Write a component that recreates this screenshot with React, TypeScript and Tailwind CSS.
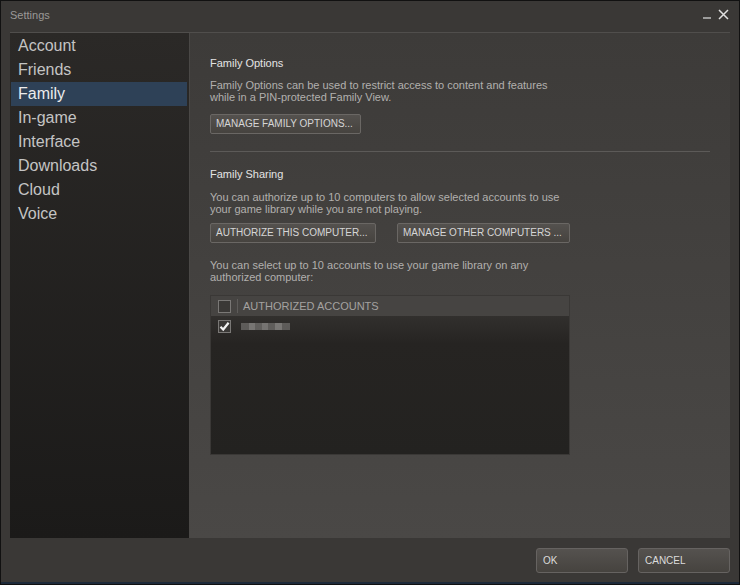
import React from "react";

const navItems = ["Account", "Friends", "Family", "In-game", "Interface", "Downloads", "Cloud", "Voice"];

const SteamButton: React.FC<{ label: string; className?: string }> = ({ label, className }) => (
  <button
    className={
      "h-[20px] whitespace-nowrap rounded-[2px] border border-[#6a6764] bg-[linear-gradient(#54514e,#46433f)] px-[5px] text-left text-[10px] leading-none text-[#d6d6d6] " +
      (className ?? "")
    }
  >
    {label}
  </button>
);

const Checkbox: React.FC<{ checked?: boolean }> = ({ checked }) => (
  <div className="flex h-[13px] w-[13px] items-center justify-center border border-[#7a7876] bg-[#3a3836]">
    {checked && (
      <svg width="11" height="11" viewBox="0 0 11 11">
        <path d="M1.5 5.8 L4.2 8.5 L9.6 1.8" stroke="#f2f2f2" strokeWidth="2.2" fill="none" />
      </svg>
    )}
  </div>
);

export default function App() {
  return (
    <div
      className="flex h-[585px] w-[740px] flex-col border border-[#111] bg-[#3a3836] text-[#c8c8c8]"
      style={{ fontFamily: "'Liberation Sans', Arial, sans-serif" }}
    >
      {/* title bar */}
      <div className="flex h-[31px] items-start justify-between pl-[9px] pr-[10px] pt-[6px]">
        <span className="text-[11px] text-[#9a9896]">Settings</span>
        <div className="flex items-center gap-[6px] text-[#d0d0d0]">
          <svg width="10" height="14" viewBox="0 0 10 14">
            <path d="M1 11 H9" stroke="#c8c8c8" strokeWidth="1.4" />
          </svg>
          <svg width="11" height="11" viewBox="0 0 11 11">
            <path d="M1 1 L10 10 M10 1 L1 10" stroke="#e0e0e0" strokeWidth="1.5" />
          </svg>
        </div>
      </div>

      {/* body */}
      <div className="mx-[9px] flex h-[506px] border-t border-[#504e4c]">
        <div className="flex w-[180px] flex-col border-r border-[#4a4846] bg-[linear-gradient(#2b2927,#1b1a19)] pl-[1px] pr-[2px] pt-px">
          {navItems.map((item) => (
            <div
              key={item}
              className={
                "h-[24px] pl-[7px] text-[16px] leading-[24px] " +
                (item === "Family" ? "bg-[#2e4157] text-[#ececec]" : "text-[#c4c4c4]")
              }
            >
              {item}
            </div>
          ))}
        </div>

        <div className="flex-1 bg-[linear-gradient(#3d3b39,#4a4846)] pl-[20px] pr-[20px] pt-[23px]">
          <div className="text-[11px] leading-[14px] text-[#e4e4e4]">Family Options</div>
          <p className="mt-[9px] text-[11px] leading-[12px] text-[#b2b0ae]">
            Family Options can be used to restrict access to content and features
            <br />
            while in a PIN-protected Family View.
          </p>
          <SteamButton label="MANAGE FAMILY OPTIONS..." className="mt-[11px] w-[151px]" />

          <div className="mt-[17px] h-px bg-[#5c5a58]" />

          <div className="mt-[15px] text-[11px] leading-[14px] text-[#e4e4e4]">Family Sharing</div>
          <p className="mt-[10px] text-[11px] leading-[12px] text-[#b2b0ae]">
            You can authorize up to 10 computers to allow selected accounts to use
            <br />
            your game library while you are not playing.
          </p>
          <div className="mt-[8px] flex gap-[21px]">
            <SteamButton label="AUTHORIZE THIS COMPUTER..." className="w-[166px]" />
            <SteamButton label="MANAGE OTHER COMPUTERS ..." className="w-[173px]" />
          </div>

          <p className="mt-[16px] text-[11px] leading-[12px] text-[#b2b0ae]">
            You can select up to 10 accounts to use your game library on any
            <br />
            authorized computer:
          </p>

          <div className="mt-[12px] flex h-[160px] w-[360px] flex-col border border-[#3a3836] bg-[linear-gradient(#3a3836,#262422_30%,#232220)]">
            <div className="flex h-[20px] items-center bg-[#464442] pl-[7px]">
              <Checkbox />
              <div className="ml-[6px] h-[14px] w-px bg-[#5e5c5a]" />
              <span className="ml-[5px] text-[11px] text-[#a4a2a0]">AUTHORIZED ACCOUNTS</span>
            </div>
            <div className="mt-[3px] flex h-[14px] items-center pl-[7px]">
              <Checkbox checked />
              <div className="ml-[10px] flex h-[7px] gap-0 opacity-80">
                <div className="h-full w-[8px] bg-[#6a6866]" />
                <div className="h-full w-[6px] bg-[#8a8886]" />
                <div className="h-full w-[7px] bg-[#6e6c6a]" />
                <div className="h-full w-[6px] bg-[#888684]" />
                <div className="h-full w-[7px] bg-[#6c6a68]" />
                <div className="h-full w-[7px] bg-[#8c8a88]" />
                <div className="h-full w-[8px] bg-[#6a6866]" />
              </div>
            </div>
          </div>
        </div>
      </div>

      {/* footer */}
      <div className="flex flex-1 items-start justify-end gap-[10px] border-b-2 border-[#1d2a3a] pr-[9px] pt-[10px]">
        <button className="h-[25px] w-[92px] rounded-[3px] border border-[#666361] bg-[linear-gradient(#55524f,#46433f)] pl-[6px] text-left text-[10px] text-[#dcdcdc]">
          OK
        </button>
        <button className="h-[25px] w-[92px] rounded-[3px] border border-[#666361] bg-[linear-gradient(#55524f,#46433f)] pl-[6px] text-left text-[10px] text-[#dcdcdc]">
          CANCEL
        </button>
      </div>
    </div>
  );
}
